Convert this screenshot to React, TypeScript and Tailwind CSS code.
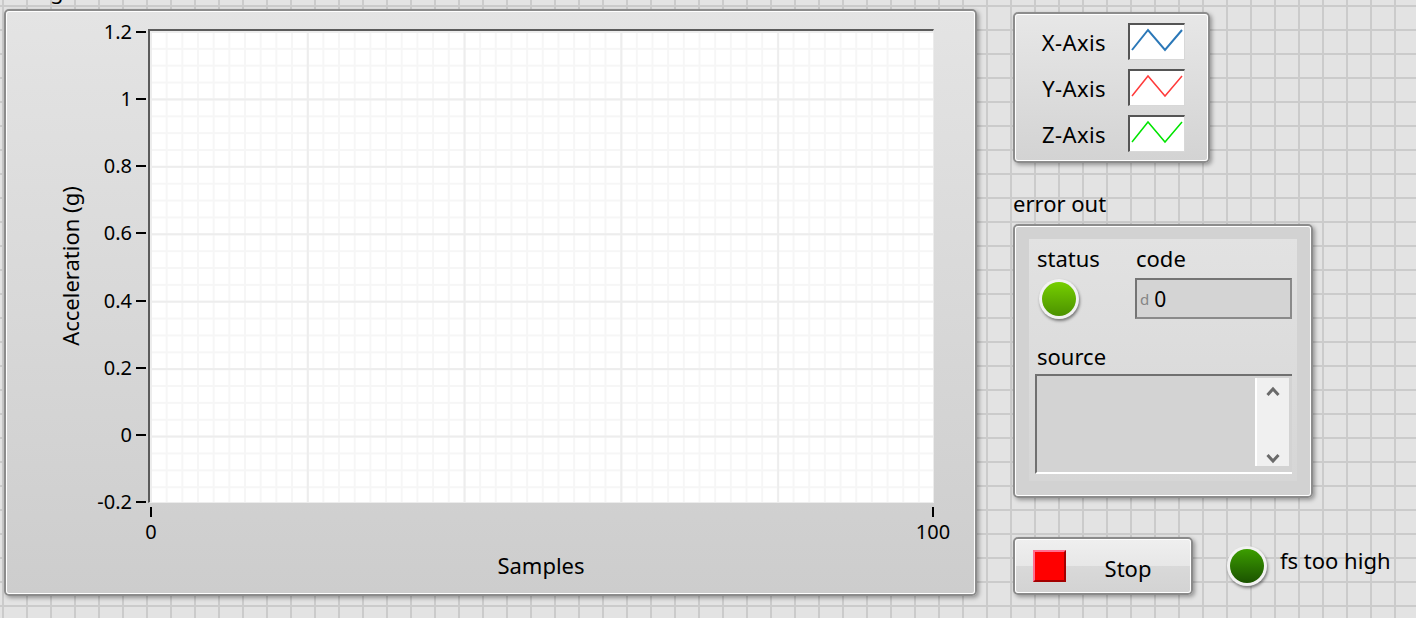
import React from "react";

const yTicks = ["1.2", "1", "0.8", "0.6", "0.4", "0.2", "0", "-0.2"];

function Swatch({ color, width }: { color: string; width: number }) {
  return (
    <div className="w-[57px] h-[37px] bg-white border-t-2 border-l-2 border-t-[#555555] border-l-[#555555] border-r border-b border-r-[#d8d8d8] border-b-[#d8d8d8]">
      <svg width="54" height="34" viewBox="0 0 54 34" className="block">
        <polyline
          points="2,25 18,5 35,25 52,5"
          fill="none"
          stroke={color}
          strokeWidth={width}
          strokeLinejoin="miter"
        />
      </svg>
    </div>
  );
}

function Chevron({ up }: { up: boolean }) {
  return (
    <svg width="14" height="11" viewBox="0 0 14 11" className="block">
      <polyline
        points={up ? "1.5,9 7,3 12.5,9" : "1.5,2 7,8 12.5,2"}
        fill="none"
        stroke="#6a6a6a"
        strokeWidth="3"
      />
    </svg>
  );
}

export default function App() {
  return (
    <div className="w-[1416px] h-[618px] overflow-hidden flex items-start bg-[#e3e3e3] [background-image:linear-gradient(to_right,#cbcbcb_2px,transparent_2px),linear-gradient(to_bottom,#cbcbcb_2px,transparent_2px)] [background-size:24px_24px] [background-position:2px_5px] font-['Noto_Sans',sans-serif] text-black">
      {/* Graph */}
      <div className="ml-[4px] flex flex-col">
        <div className="h-[9px] overflow-hidden pl-[46px]">
          <div className="-mt-[22px] text-[22px] leading-[24px]">g</div>
        </div>
        <div className="w-[973px] h-[587px] rounded-[5px] border-2 border-[#8c8c8c] shadow-[2px_2px_4px_rgba(0,0,0,0.35)]">
          <div className="h-full rounded-[3px] border border-white bg-linear-to-b from-[#e4e4e4] to-[#cdcdcd] flex">
            {/* Y axis area */}
            <div className="w-[141px] pt-[17px]">
              <div className="grid h-[474px]">
                <div className="col-start-1 row-start-1 w-[126px] flex items-center justify-center">
                  <div className="-rotate-90 whitespace-nowrap text-[22px] leading-[24px]">
                    Acceleration (g)
                  </div>
                </div>
                <div className="col-start-1 row-start-1 flex flex-col justify-between pt-[3px] pb-[1px]">
                  {yTicks.map((t) => (
                    <div key={t} className="h-0 flex items-center justify-end pr-[2px]">
                      <span className="text-[20px] leading-[24px] mr-[4px]">{t}</span>
                      <div className="w-[10px] h-[2px] bg-black" />
                    </div>
                  ))}
                </div>
              </div>
            </div>
            {/* Plot column */}
            <div className="w-[786px] pt-[17px] flex flex-col">
              <div className="h-[474px] border-l-2 border-t-2 border-[#5b5b5b] border-r border-b border-r-[#ececec] border-b-[#ececec] bg-white [background-image:linear-gradient(to_right,#ededed_2px,transparent_2px),linear-gradient(to_bottom,#ededed_2px,transparent_2px),linear-gradient(to_right,#f6f6f6_2px,transparent_2px),linear-gradient(to_bottom,#f6f6f6_2px,transparent_2px)] [background-size:156.8px_100%,100%_67.43px,15.68px_100%,100%_16.86px]" />
              <div className="mt-[4px] flex justify-between pl-[3px] pr-[1px]">
                {["0", "100"].map((t) => (
                  <div key={t} className="w-0 flex flex-col items-center">
                    <div className="w-[2px] h-[10px] bg-black" />
                    <span className="mt-[3px] text-[20px] leading-[24px]">{t}</span>
                  </div>
                ))}
              </div>
              <div className="mt-[9px] text-center text-[22px] leading-[24px]">Samples</div>
            </div>
          </div>
        </div>
      </div>

      {/* Right column */}
      <div className="ml-[36px] flex flex-col">
        {/* Legend */}
        <div className="mt-[12px] w-[197px] h-[151px] rounded-[5px] border-2 border-[#8c8c8c] shadow-[2px_2px_4px_rgba(0,0,0,0.35)]">
          <div className="h-full rounded-[3px] border border-white bg-linear-to-b from-[#e7e7e7] to-[#d3d3d3] flex flex-col gap-[9px] pt-[8px] pr-[22px]">
            {[
              { l: "X-Axis", c: "#2b78b8", w: 2 },
              { l: "Y-Axis", c: "#ff3b3b", w: 1.5 },
              { l: "Z-Axis", c: "#00e400", w: 1.5 },
            ].map((r) => (
              <div key={r.l} className="flex items-center justify-end gap-[22px]">
                <span className="text-[22px] leading-[24px] tracking-[0.4px]">{r.l}</span>
                <Swatch color={r.c} width={r.w} />
              </div>
            ))}
          </div>
        </div>

        {/* error out */}
        <div className="mt-[28px] text-[22px] leading-[24px]">error out</div>
        <div className="mt-[9px] w-[300px] h-[274px] rounded-[5px] border-2 border-[#8c8c8c] shadow-[2px_2px_4px_rgba(0,0,0,0.35)]">
          <div className="h-full rounded-[3px] border border-white bg-[#d2d2d2] pl-[13px] pt-[12px]">
            <div className="w-[268px] h-[242px] bg-linear-to-b from-[#e2e2e2] to-[#d6d6d6] pl-[6px] pt-[7px]">
              <div className="flex">
                <div className="w-[100px]">
                  <div className="pl-[2px] text-[22px] leading-[24px]">status</div>
                  <div className="mt-[9px] ml-[4px] w-[40px] h-[40px] rounded-full bg-[#f2f2f2] p-[3px] shadow-[1px_2px_3px_rgba(0,0,0,0.45)]">
                    <div className="w-full h-full rounded-full bg-linear-to-b from-[#76cf00] to-[#4c9200]" />
                  </div>
                </div>
                <div className="w-[157px]">
                  <div className="pl-[1px] text-[22px] leading-[24px]">code</div>
                  <div className="mt-[8px] h-[41px] border-2 border-[#8a8a8a] border-t-[#747474] border-l-[#747474] bg-[#d4d4d4] flex items-center pl-[3px]">
                    <span className="text-[15px] leading-[20px] text-[#858585]">d</span>
                    <span className="ml-[5px] text-[21px] leading-[24px]">0</span>
                  </div>
                </div>
              </div>
              <div className="mt-[25px] pl-[2px] text-[22px] leading-[24px]">source</div>
              <div className="mt-[6px] w-[257px] h-[100px] border-t-2 border-l-2 border-[#707070] border-b-2 border-b-white bg-[#d3d3d3] flex justify-end items-start pt-[2px] pr-[3px]">
                <div className="w-[34px] h-[88px] bg-[#f0f0f0] border-l-2 border-white flex flex-col items-center justify-between pt-[8px] pb-[2px]">
                  <Chevron up />
                  <Chevron up={false} />
                </div>
              </div>
            </div>
          </div>
        </div>

        {/* Bottom row */}
        <div className="mt-[39px] flex items-center">
          <div className="w-[180px] h-[58px] rounded-[5px] border-2 border-[#8a8a8a] shadow-[2px_2px_4px_rgba(0,0,0,0.35)]">
            <div className="h-full rounded-[3px] border border-white [background-image:linear-gradient(to_bottom,#efefef_0%,#e7e7e7_50%,#d9d9d9_50%,#d3d3d3_100%)] flex items-center pl-[17px]">
              <div className="w-[33px] h-[32px] bg-[#ff0000] border-2 border-t-[#ff6f8f] border-l-[#ff6f8f] border-r-[#a30000] border-b-[#a30000]" />
              <div className="flex-1 text-center text-[22px] leading-[24px] pt-[4px]">Stop</div>
            </div>
          </div>
          <div className="ml-[34px] w-[40px] h-[40px] rounded-full bg-[#f2f2f2] p-[3px] shadow-[1px_2px_3px_rgba(0,0,0,0.45)]">
            <div className="w-full h-full rounded-full bg-linear-to-b from-[#3c9e00] to-[#1b5300]" />
          </div>
          <div className="ml-[13px] mb-[12px] text-[22px] leading-[24px]">fs too high</div>
        </div>
      </div>
    </div>
  );
}
